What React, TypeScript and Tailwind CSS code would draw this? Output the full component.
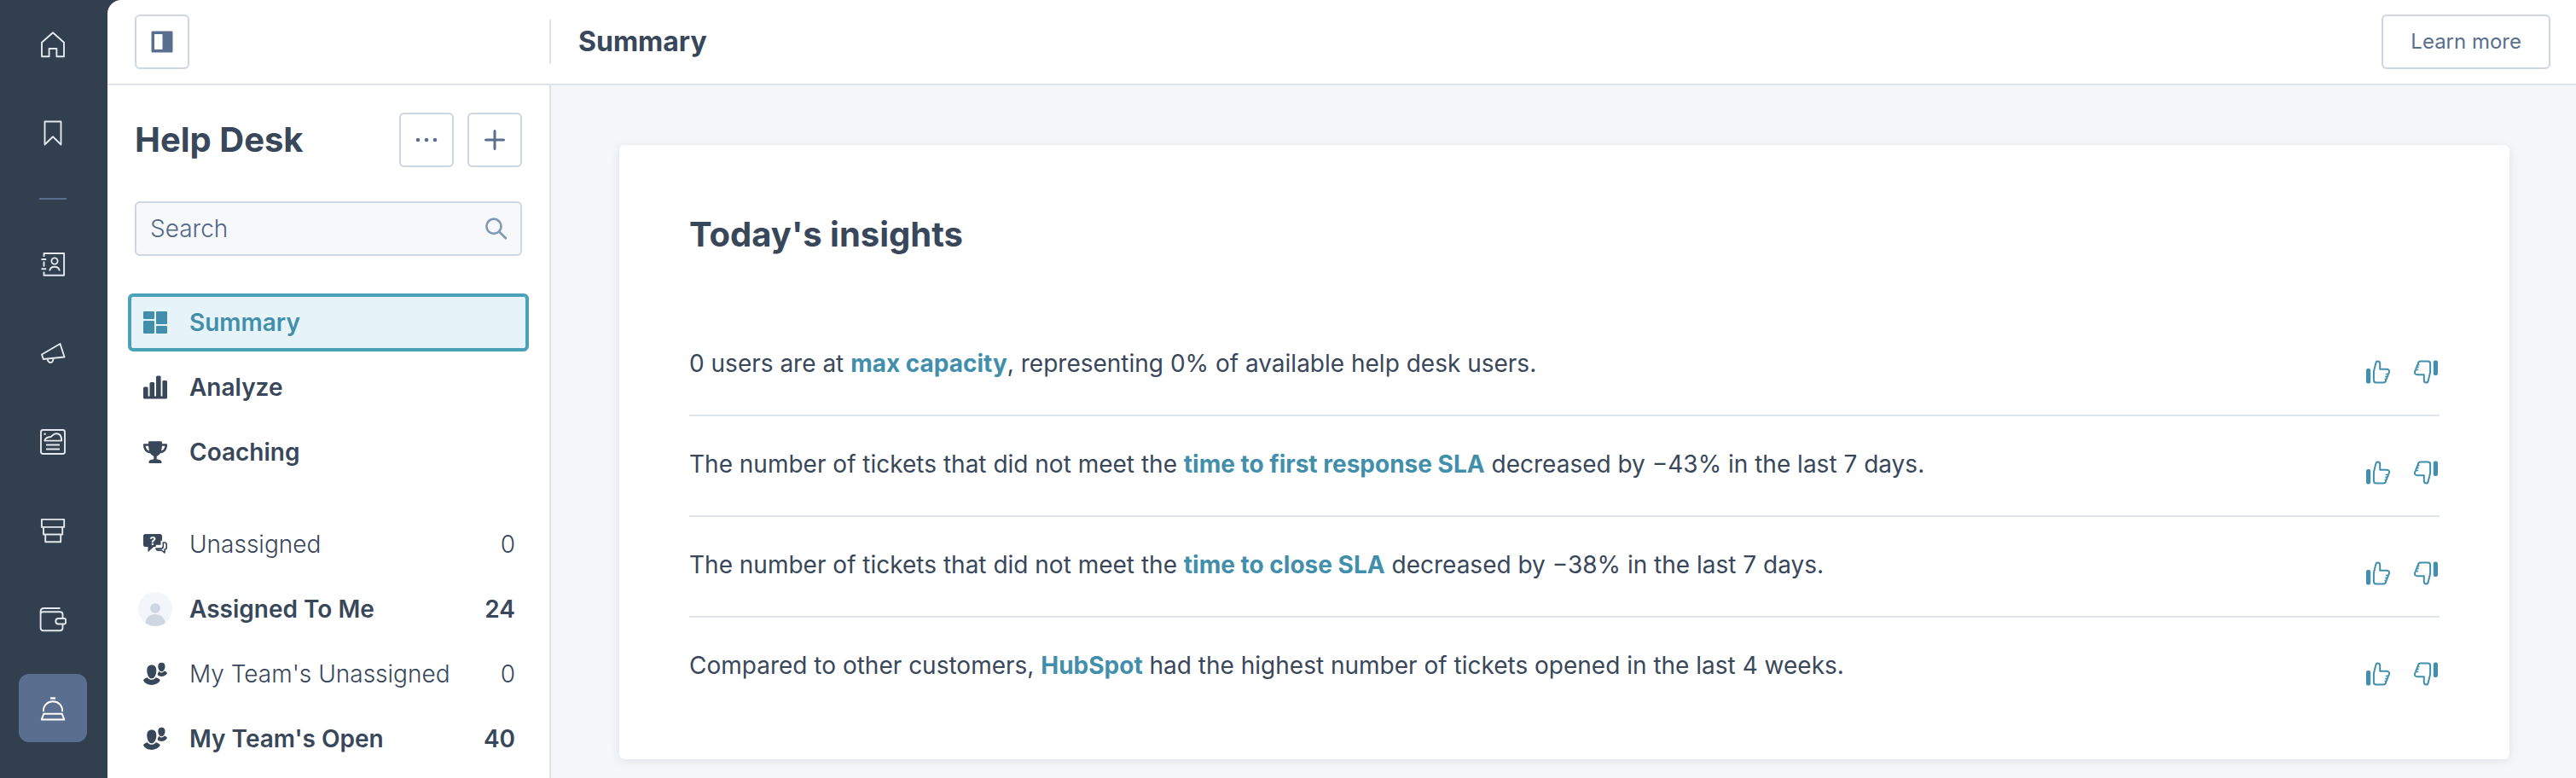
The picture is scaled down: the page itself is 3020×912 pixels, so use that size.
import React, { useState } from 'react';
import clsx from 'clsx';

interface QueueItem {
  label: string;
  count?: number;
  bold: boolean;
  icon: React.ReactNode;
}

interface Insight {
  before: string;
  link: string;
  after: string;
}

const NavIcon: React.FC<{ children: React.ReactNode }> = ({ children }) => (
  <svg
    viewBox="0 0 32 32"
    className="size-8"
    fill="none"
    stroke="currentColor"
    strokeWidth="1.9"
    strokeLinejoin="round"
    aria-hidden="true"
  >
    {children}
  </svg>
);

const SolidIcon: React.FC<{ children: React.ReactNode }> = ({ children }) => (
  <svg viewBox="0 0 28 28" className="size-7" fill="currentColor" aria-hidden="true">
    {children}
  </svg>
);

const HomeIcon = () => (
  <NavIcon>
    <path d="M3 13.8 16 2.2l13 11.6v16.4h-8.6V21h-8.8v9.2H3z" />
  </NavIcon>
);

const BookmarkIcon = () => (
  <NavIcon>
    <path d="M6.5 2.5h19v27L16 20.3 6.5 29.5z" />
  </NavIcon>
);

const ContactsIcon = () => (
  <NavIcon>
    <path d="M5.5 7V3h23.6v25.8H5.5V24.5M5.5 12.5v6M2.5 10h5.7M2.5 21.2h5.7" />
    <circle cx="18" cy="12" r="3.6" />
    <path d="M12.3 23.5c.6-6.4 10.8-6.4 11.4 0" />
  </NavIcon>
);

const MegaphoneIcon = () => (
  <NavIcon>
    <path d="M3 17.5 24.5 5l5 15.5L4.8 23z" />
    <path d="M9.8 22.7c0 5.8 6.7 5.8 6.7-.6" />
  </NavIcon>
);

const ContentIcon = () => (
  <NavIcon>
    <rect x="2" y="2" width="28" height="28" rx="2.5" />
    <path d="M6.3 14.6c1.4-4 4.3-4.5 7-4.4 2-.2 2.4-4 6.6-4 4.4 0 6.3 3 6.3 8.4z" />
    <path d="M8 19.5h16M8 24.5h16" />
    <circle cx="6.6" cy="6.8" r="1.2" fill="currentColor" stroke="none" />
  </NavIcon>
);

const CommerceIcon = () => (
  <NavIcon>
    <path d="M2.9 2.9h26.3v9H2.9zM5 11.9h22.2v8.6H5zM7.2 20.5h18v8.7h-18z" />
  </NavIcon>
);

const WalletIcon = () => (
  <NavIcon>
    <path d="M24.5 3h-19C3 3 1.6 4.8 1.6 7v19c0 2 1.3 3.2 3.2 3.2h19.5c2 0 3.2-1.2 3.2-3.2v-4.5M27.5 15v-4.5c0-2-1.2-3.2-3.2-3.2H5c-1.9 0-3.2.8-3.4 2" />
    <path d="M22.5 15h7c1 0 1.5.5 1.5 1.4v3.7c0 .9-.5 1.4-1.5 1.4h-7c-4.2 0-4.2-6.5 0-6.5z" />
  </NavIcon>
);

const BellIcon = () => (
  <NavIcon>
    <path d="M13 4.5h6" strokeWidth="2.4" />
    <path d="M4.8 20.3C4.5 4.2 27.5 4.2 27.2 20.3" />
    <path d="M5.3 22.7h21.4l2.5 6.8H2.8z" />
  </NavIcon>
);

const SummaryIcon = () => (
  <SolidIcon>
    <rect x="0" y="1" width="13" height="9" rx="1" />
    <rect x="0" y="12" width="13" height="15" rx="1" />
    <rect x="15" y="1" width="13" height="15" rx="1" />
    <rect x="15" y="18" width="13" height="9" rx="1" />
  </SolidIcon>
);

const AnalyzeIcon = () => (
  <SolidIcon>
    <rect x="0" y="13.5" width="5.6" height="13" rx="1.5" />
    <rect x="7.5" y="8" width="5.6" height="18" rx="1.5" />
    <rect x="15" y="0.5" width="5.6" height="26" rx="1.5" />
    <rect x="22.4" y="6" width="5.6" height="20" rx="1.5" />
    <path d="M0 24.5h28V26a1.5 1.5 0 0 1-1.5 1.5h-25A1.5 1.5 0 0 1 0 26z" />
  </SolidIcon>
);

const TrophyIcon = () => (
  <SolidIcon>
    <path
      fillRule="evenodd"
      d="M7.5 1.2h13c.9 0 1.4.5 1.4 1.4v1.7H27c.7 0 1 .4 1 1 0 6-2.9 9.7-8.4 10.2-1.2 1.7-2.4 2.6-3.9 3.3v3.6c3 .2 5.9.8 5.9 3.6 0 .6-.3.9-.9.9H7.3c-.6 0-.9-.3-.9-.9 0-2.8 2.9-3.4 5.9-3.6v-3.6c-1.500-.7-2.7-1.6-3.9-3.3C2.9 15 0 11.3 0 5.3c0-.6.3-1 1-1h5.100V2.6c0-.9.5-1.4 1.4-1.4zM2.6 6.700c.5 3 1.9 4.9 4.4 5.700-.6-1.8-.8-3.6-.9-5.700zm19.300 0c-.1 2.100-.3 3.900-.9 5.700 2.500-.8 3.900-2.700 4.400-5.700z"
    />
  </SolidIcon>
);

const UnassignedIcon = () => (
  <SolidIcon>
    <path d="M2.5 2h17C21.2 2 22 2.9 22 4.5v5.2h-1.5v5H15l-.5 2.3h-2.3l-6.7 6.3V17h-3C.8 17 0 16.2 0 14.5v-10C0 2.9.8 2 2.5 2z" />
    <path
      d="M23.3 12h1.6c1.6 0 2.3.8 2.3 2.2v3.6c0 1.5-.7 2.2-2.2 2.2v4l-3.6-2.9h-4c-1.6 0-2.2-.6-2.5-2h5.6c1.9 0 2.8-.9 2.8-2.6z"
      fill="none"
      stroke="currentColor"
      strokeWidth="1.6"
      strokeLinejoin="round"
    />
    <text x="11.2" y="14.5" textAnchor="middle" fontSize="13" fontWeight="700" fill="#ffffff">
      ?
    </text>
  </SolidIcon>
);

const TeamIcon = () => (
  <SolidIcon>
    <path d="M9.8 3.6c3.6 0 5.7 2.6 5.5 6.8-.2 4.6-2.4 8.9-5.5 8.9s-5.3-4.3-5.5-8.9c-.2-4.2 1.9-6.8 5.5-6.8z" />
    <path d="M4.9 18.2c2.8 3.5 7 3.5 9.8 0 2.4.4 4.2 1.5 5.1 3.4C17.8 25.3 14 27 9.8 27S1.8 25.3 0 21.6c.8-1.900 2.600-3 4.900-3.400z" />
    <path d="M21.4.8c2.8 0 4.3 1.9 4.1 4.7-.2 3-1.8 5.7-4.1 5.7s-3.9-2.7-4.1-5.7C17.100 2.700 18.600.8 21.400.8z" />
    <path d="M18.2 10.7c1.9 2.4 4.6 2.4 6.5-.1 1.7.5 2.8 1.3 3.3 2.6-1.9 3.4-6.7 4.7-10.8 2.9-.4-.8-.5-1.7-.3-2.6.6-.7 1-1.8 1.300-2.800z" />
  </SolidIcon>
);

const AvatarIcon = () => (
  <svg viewBox="0 0 40 40" className="size-10" aria-hidden="true">
    <circle cx="20" cy="20" r="20" fill="#f2f5f9" />
    <circle cx="20" cy="19" r="5.8" fill="#cdd6e1" />
    <path d="M8.3 36.2C9.5 29.5 14 26 20 26s10.5 3.5 11.7 10.2A20 20 0 0 1 20 40a20 20 0 0 1-11.7-3.8z" fill="#cdd6e1" />
  </svg>
);

const ThumbIcon: React.FC<{ down?: boolean }> = ({ down }) => (
  <svg viewBox="0 0 28 28" className={clsx('size-7', down && 'rotate-180')} aria-hidden="true">
    <rect x="0" y="10" width="5.2" height="17.5" rx="2" fill="currentColor" />
    <path
      d="M8.9 13.5 11.2 4c.3-1.8 1-2.6 2.4-2.6 1.8 0 2.6 1.1 2.6 3v6.4h7.6c2.4 0 3.5 1.2 3.2 3.2-.2 1.2-.6 2-1.4 2.5.3 1.3-.2 2.4-1.1 3.1.2 1.3-.2 2.3-1.1 3-.1 2.5-1.2 3.8-3.4 3.8h-8.3c-1.9 0-2.8-.9-2.8-2.7z"
      fill="none"
      stroke="currentColor"
      strokeWidth="2"
      strokeLinejoin="round"
    />
    <path d="M25.8 16.5h-3M24.6 19.6h-2.3M23.4 22.6h-1.8" stroke="currentColor" strokeWidth="1.6" />
  </svg>
);

const navTop = [
  { label: 'Home', icon: <HomeIcon /> },
  { label: 'Bookmarks', icon: <BookmarkIcon /> },
];

const navMain = [
  { label: 'CRM', icon: <ContactsIcon /> },
  { label: 'Marketing', icon: <MegaphoneIcon /> },
  { label: 'Content', icon: <ContentIcon /> },
  { label: 'Commerce', icon: <CommerceIcon /> },
  { label: 'Payments', icon: <WalletIcon /> },
  { label: 'Service', icon: <BellIcon /> },
];

const views: QueueItem[] = [
  { label: 'Summary', bold: true, icon: <SummaryIcon /> },
  { label: 'Analyze', bold: true, icon: <AnalyzeIcon /> },
  { label: 'Coaching', bold: true, icon: <TrophyIcon /> },
];

const queues: QueueItem[] = [
  { label: 'Unassigned', count: 0, bold: false, icon: <UnassignedIcon /> },
  { label: 'Assigned To Me', count: 24, bold: true, icon: <AvatarIcon /> },
  { label: "My Team's Unassigned", count: 0, bold: false, icon: <TeamIcon /> },
  { label: "My Team's Open", count: 40, bold: true, icon: <TeamIcon /> },
];

const insights: Insight[] = [
  {
    before: '0 users are at ',
    link: 'max capacity',
    after: ', representing 0% of available help desk users.',
  },
  {
    before: 'The number of tickets that did not meet the ',
    link: 'time to first response SLA',
    after: ' decreased by −43% in the last 7 days.',
  },
  {
    before: 'The number of tickets that did not meet the ',
    link: 'time to close SLA',
    after: ' decreased by −38% in the last 7 days.',
  },
  {
    before: 'Compared to other customers, ',
    link: 'HubSpot',
    after: ' had the highest number of tickets opened in the last 4 weeks.',
  },
];

const NavLink: React.FC<{ label: string; icon: React.ReactNode; active?: boolean }> = ({
  label,
  icon,
  active,
}) => (
  <a
    href="#"
    aria-label={label}
    className={clsx(
      'flex size-20 items-center justify-center rounded-xl',
      active ? 'bg-[#5a6f8f] text-white' : 'text-[#e3e8ef]'
    )}
  >
    {icon}
  </a>
);

const SidebarList: React.FC<{
  items: QueueItem[];
  selected: string;
  onSelect: (label: string) => void;
}> = ({ items, selected, onSelect }) => (
  <ul className="-mx-2 flex flex-col gap-2">
    {items.map((item) => {
      const active = item.label === selected;
      return (
        <li key={item.label}>
          <button
            type="button"
            onClick={() => onSelect(item.label)}
            className={clsx(
              'flex h-17 w-full items-center gap-5 rounded-md border-4 pr-3 pl-2 text-left text-[28px]',
              active ? 'border-[#4aa2b9] bg-[#e6f3f8] text-[#428fab]' : 'border-transparent',
              item.bold ? 'font-semibold' : 'font-light'
            )}
          >
            <span className="flex w-10 shrink-0 justify-center">{item.icon}</span>
            <span className="grow">{item.label}</span>
            {item.count !== undefined && <span>{item.count}</span>}
          </button>
        </li>
      );
    })}
  </ul>
);

const outlineButton =
  'flex h-16 items-center justify-center rounded-md border-2 border-[#cdd6e1] bg-white text-[#5a6f8f]';

const App: React.FC = () => {
  const [selected, setSelected] = useState('Summary');
  const [search, setSearch] = useState('');

  return (
    <div className="flex min-h-screen bg-[#323f4e] font-['Inter',sans-serif] text-[#38475a]">
      <nav className="flex w-[126px] shrink-0 flex-col items-center pt-3 pr-0.5" aria-label="Main">
        <div className="flex flex-col gap-6">
          {navTop.map((item) => (
            <NavLink key={item.label} {...item} />
          ))}
        </div>
        <hr className="my-9 w-8 border-t-2 border-[#5a6f8f]" />
        <div className="flex flex-col gap-6">
          {navMain.map((item) => (
            <NavLink key={item.label} {...item} active={item.label === 'Service'} />
          ))}
        </div>
      </nav>

      <div className="flex min-w-0 grow flex-col overflow-hidden rounded-tl-2xl bg-white">
        <header className="flex h-[100px] shrink-0 items-center border-b-2 border-[#dfe3ea]">
          <div className="flex h-13 w-[520px] shrink-0 items-center border-r-2 border-[#dfe3ea] pl-8">
            <button type="button" aria-label="Toggle sidebar" className={clsx(outlineButton, 'w-16')}>
              <svg viewBox="0 0 26 26" className="size-6.5" fill="currentColor" aria-hidden="true">
                <path
                  fillRule="evenodd"
                  d="M2 .5h22c1 0 1.5.5 1.5 1.5v22c0 1-.5 1.5-1.5 1.5H2c-1 0-1.5-.5-1.5-1.5V2C.5 1 1 .5 2 .5zM5 4c-.7 0-1 .3-1 1v16c0 .7.3 1 1 1h7.5c.7 0 1-.3 1-1V5c0-.7-.3-1-1-1z"
                />
              </svg>
            </button>
          </div>
          <h1 className="grow pl-8 text-[32px] font-bold">Summary</h1>
          <button type="button" className={clsx(outlineButton, 'mr-[30px] px-8 text-2xl')}>
            Learn more
          </button>
        </header>

        <div className="flex grow">
          <aside className="w-[520px] shrink-0 border-r-2 border-[#dfe3ea] px-8 pt-8">
            <div className="flex items-center gap-4">
              <h2 className="grow text-[40px] font-bold">Help Desk</h2>
              <button type="button" aria-label="More options" className={clsx(outlineButton, 'w-16')}>
                <svg viewBox="0 0 28 28" className="size-7" fill="currentColor" aria-hidden="true">
                  <circle cx="4" cy="14" r="2.3" />
                  <circle cx="14" cy="14" r="2.3" />
                  <circle cx="24" cy="14" r="2.3" />
                </svg>
              </button>
              <button type="button" aria-label="Add view" className={clsx(outlineButton, 'w-16')}>
                <svg
                  viewBox="0 0 28 28"
                  className="size-7"
                  stroke="currentColor"
                  strokeWidth="3"
                  strokeLinecap="round"
                  aria-hidden="true"
                >
                  <path d="M14 3.5v21M3.5 14h21" />
                </svg>
              </button>
            </div>

            <label className="mt-10 mb-11 flex h-16 items-center rounded-md border-2 border-[#cdd6e1] bg-[#f6f8fa] px-4">
              <input
                type="text"
                aria-label="Search"
                placeholder="Search"
                value={search}
                onChange={(e) => setSearch(e.target.value)}
                className="min-w-0 grow bg-transparent text-[28px] font-light outline-none placeholder:text-[#516787]"
              />
              <svg
                viewBox="0 0 28 28"
                className="size-7 text-[#8099b7]"
                fill="none"
                stroke="currentColor"
                strokeWidth="3"
                strokeLinecap="round"
                aria-hidden="true"
              >
                <circle cx="11" cy="11" r="9.5" />
                <path d="m18 18 8.5 8.5" />
              </svg>
            </label>

            <div className="flex flex-col gap-10">
              <SidebarList items={views} selected={selected} onSelect={setSelected} />
              <SidebarList items={queues} selected={selected} onSelect={setSelected} />
            </div>
          </aside>

          <main className="min-w-0 grow bg-[#f6f7fa] pt-[70px] pr-[78px] pl-20">
            <section className="rounded-md bg-white px-[82px] pt-20 pb-[50px] shadow-[0_2px_14px_rgba(45,62,80,0.12)]">
              <h2 className="mb-[70px] text-[40px] leading-[50px] font-bold">Today's insights</h2>
              <ul>
                {insights.map((insight) => (
                  <li
                    key={insight.link}
                    className="flex items-start justify-between gap-8 border-b-2 border-[#dfe3ea] py-9 last:border-b-0"
                  >
                    <p className="text-[28px] leading-10">
                      {insight.before}
                      <a href="#" className="font-bold text-[#428fab]">
                        {insight.link}
                      </a>
                      {insight.after}
                    </p>
                    <div className="flex h-11 shrink-0 items-end gap-7 pr-0.5 text-[#428fab]">
                      <button type="button" aria-label="Helpful">
                        <ThumbIcon />
                      </button>
                      <button type="button" aria-label="Not helpful">
                        <ThumbIcon down />
                      </button>
                    </div>
                  </li>
                ))}
              </ul>
            </section>
          </main>
        </div>
      </div>
    </div>
  );
};

export default App;
